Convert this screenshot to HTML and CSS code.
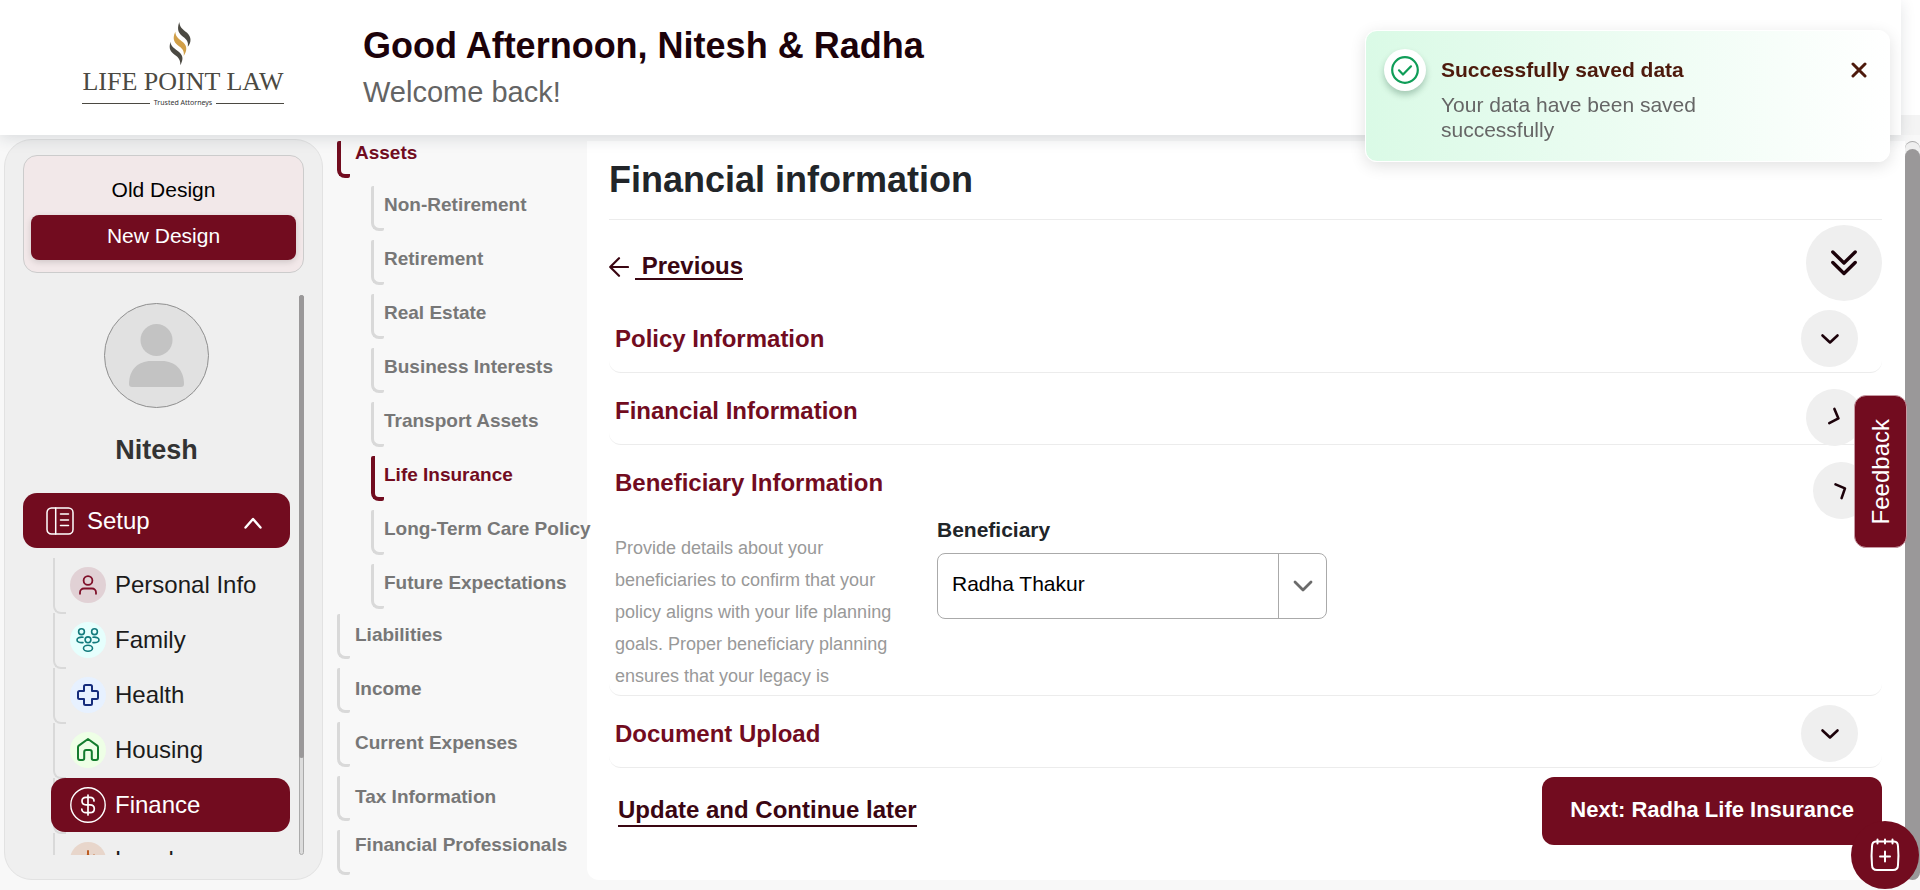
FILE: index.html
```html
<!DOCTYPE html>
<html lang="en">
<head>
<meta charset="utf-8">
<title>Life Point Law - Financial information</title>
<link rel="stylesheet" href="styles.css">
</head>
<body>
<div class="topbar">
  <header class="header">
    <div class="logo">
      <svg class="logo-mark" viewBox="296 34 70 134" aria-hidden="true">
        <path fill="#4b4942" d="M329 37C320 60 328 72 340 81C352 90 357 98 354 111C365 98 366 82 352 69C338 58 330 52 329 37Z"/>
        <path fill="#d19f48" d="M317 66C306 90 316 100 328 109C341 118 344 126 342 138C352 122 353 110 341 98C328 87 318 82 317 66Z"/>
        <path fill="#4b4942" d="M303 96C296 117 303 126 316 135C328 143 333 152 332 166C340 150 342 139 329 127C314 115 303 110 303 96Z"/>
      </svg>
      <span class="logo-name">LIFE POINT LAW</span>
      <span class="logo-tag">Trusted Attorneys</span>
    </div>
    <div class="greeting">
      <p class="greeting-title">Good Afternoon, Nitesh &amp; Radha</p>
      <p class="greeting-sub">Welcome back!</p>
    </div>
  </header>
</div>

<div class="layout">
  <aside class="sidebar">
    <div class="design-switch">
      <button class="design-option" type="button">Old Design</button>
      <button class="design-option design-option-on" type="button">New Design</button>
    </div>
    <div class="side-scroll">
      <div class="side-content">
        <svg class="avatar" viewBox="0 0 105 105" aria-hidden="true">
          <circle cx="52.5" cy="52.5" r="52" fill="#e1e1e1" stroke="#8f8f8f"/>
          <circle cx="52.5" cy="37" r="16" fill="#c3c3c3"/>
          <path fill="#c3c3c3" d="M25 81c0-14 9-23 22-23h11c13 0 22 9 22 23q0 3-3 3H28q-3 0-3-3Z"/>
        </svg>
        <p class="profile-name">Nitesh</p>
        <button class="setup" type="button">
          <svg class="setup-icon" viewBox="0 0 28 28" fill="none" stroke="#fff" stroke-width="1.5" stroke-linecap="round" aria-hidden="true">
            <rect x="1" y="1" width="26" height="26" rx="4.5"/><path d="M9.700 1v26M14.500 7h8M14.500 13h8M14.500 18.500h8"/>
          </svg>
          <span class="setup-text">Setup</span>
          <svg class="setup-arrow" viewBox="0 0 18 12" fill="none" stroke="#fff" stroke-width="2.400" stroke-linecap="round" stroke-linejoin="round" aria-hidden="true"><path d="M1.500 10.500 9 2l7.500 8.500"/></svg>
        </button>
        <ul class="steps">
          <li class="step"><a class="step-link" href="#personal">
            <svg class="step-icon" viewBox="0 0 36 36" fill="none" stroke="#7f1029" stroke-width="1.800" stroke-linecap="round" aria-hidden="true"><circle cx="18" cy="18" r="18" fill="#e1d1d5" stroke="none"/><circle cx="18" cy="13.500" r="4.400"/><path d="M10 26.800v-1.300a4 4 0 0 1 4-4h8a4 4 0 0 1 4 4v1.300"/></svg>
            Personal Info</a></li>
          <li class="step"><a class="step-link" href="#family">
            <svg class="step-icon" viewBox="0 0 36 36" fill="none" stroke="#117a7c" stroke-width="1.600" stroke-linecap="round" aria-hidden="true"><circle cx="18" cy="18" r="18" fill="#e6fffd" stroke="none"/><circle cx="11.500" cy="9.700" r="2.900"/><circle cx="24.500" cy="9.700" r="2.900"/><circle cx="18" cy="17.800" r="2.900"/><ellipse cx="18" cy="26.200" rx="4.500" ry="3"/><path d="M13 20.600c-3.700.3-6-.7-6-2.700s2.300-3 6-2.700M23 20.600c3.700.3 6-.7 6-2.700s-2.300-3-6-2.700"/></svg>
            Family</a></li>
          <li class="step"><a class="step-link" href="#health">
            <svg class="step-icon" viewBox="0 0 36 36" fill="none" stroke="#152c7c" stroke-width="2" stroke-linejoin="round" aria-hidden="true"><circle cx="18" cy="18" r="18" fill="#e7f1ff" stroke="none"/><path d="M15.500 8h5q1.500 0 1.500 1.500V14h4.500q1.500 0 1.500 1.500v5q0 1.500-1.500 1.500H22v4.500q0 1.500-1.500 1.500h-5q-1.500 0-1.500-1.500V22H9.500Q8 22 8 20.500v-5Q8 14 9.500 14H14V9.500Q14 8 15.500 8Z"/></svg>
            Health</a></li>
          <li class="step"><a class="step-link" href="#housing">
            <svg class="step-icon" viewBox="0 0 36 36" fill="none" stroke="#137c2d" stroke-width="2" stroke-linejoin="round" aria-hidden="true"><circle cx="18" cy="18" r="18" fill="#eeffe6" stroke="none"/><path d="M18 7 8.800 13.600Q8 14.200 8 15.200V26q0 2 2 2h2.500q1.700 0 1.700-1.700V20q0-2 2-2h3.600q2 0 2 2v6.300q0 1.700 1.700 1.700H26q2 0 2-2V15.200q0-1-.8-1.600Z"/></svg>
            Housing</a></li>
          <li class="step"><a class="step-link step-link-on" href="#finance">
            <svg class="step-icon" viewBox="0 0 36 36" fill="none" stroke="#fff" stroke-width="1.700" stroke-linecap="round" aria-hidden="true"><circle cx="18" cy="18" r="17.200" stroke-width="1.400"/><path d="M18 8v20M24 14c0-2.500-2-3.700-4-3.700h-4c-2.400 0-4 1.500-4 3.700s1.600 3.800 4 3.800h4c2.600 0 4.300 1.600 4.300 3.900s-1.700 4-4.300 4h-4c-2.400 0-4.200-1.400-4.200-3.700"/></svg>
            Finance</a></li>
          <li class="step"><a class="step-link" href="#legal">
            <svg class="step-icon" viewBox="0 0 36 36" fill="none" stroke="#b8500f" stroke-width="1.800" stroke-linecap="round" aria-hidden="true"><circle cx="18" cy="18" r="18" fill="#e8d6cb" stroke="none"/><path d="M18 9v18M12 15c3 0 4-1.500 6-1.500s3 1 6 .5M12 15l-3 7h6ZM24 14l-3 7h6ZM13 27h10"/></svg>
            Legal</a></li>
        </ul>
      </div>
      <div class="side-track"><div class="side-thumb"></div></div>
    </div>
  </aside>

  <nav class="subnav" aria-label="Finance sections">
    <a class="nav-item nav-item-first nav-item-on" href="#assets"><span class="bracket"></span><span class="nav-text">Assets</span></a>
    <div class="nav-children">
      <a class="nav-item" href="#non-retirement"><span class="bracket"></span><span class="nav-text">Non-Retirement</span></a>
      <a class="nav-item" href="#retirement"><span class="bracket"></span><span class="nav-text">Retirement</span></a>
      <a class="nav-item" href="#real-estate"><span class="bracket"></span><span class="nav-text">Real Estate</span></a>
      <a class="nav-item" href="#business"><span class="bracket"></span><span class="nav-text">Business Interests</span></a>
      <a class="nav-item" href="#transport"><span class="bracket"></span><span class="nav-text">Transport Assets</span></a>
      <a class="nav-item nav-item-on" href="#life"><span class="bracket"></span><span class="nav-text">Life Insurance</span></a>
      <a class="nav-item" href="#long-term"><span class="bracket"></span><span class="nav-text">Long-Term Care Policy</span></a>
      <a class="nav-item" href="#future"><span class="bracket"></span><span class="nav-text">Future Expectations</span></a>
    </div>
    <a class="nav-item" href="#liabilities"><span class="bracket"></span><span class="nav-text">Liabilities</span></a>
    <a class="nav-item" href="#income"><span class="bracket"></span><span class="nav-text">Income</span></a>
    <a class="nav-item" href="#expenses"><span class="bracket"></span><span class="nav-text">Current Expenses</span></a>
    <a class="nav-item" href="#tax"><span class="bracket"></span><span class="nav-text">Tax Information</span></a>
    <a class="nav-item nav-item-last" href="#professionals"><span class="bracket"></span><span class="nav-text">Financial Professionals</span></a>
  </nav>

  <main class="panel">
    <h1 class="page-title">Financial information</h1>
    <div class="previous-row">
      <a class="previous" href="#previous">
        <svg class="previous-arrow" viewBox="0 0 20 20" fill="none" stroke="#3a0612" stroke-width="2.200" stroke-linecap="round" stroke-linejoin="round" aria-hidden="true"><path d="M19 10H1.200M10 1.200 1.200 10l8.800 8.800"/></svg>
        <span class="previous-text">&nbsp;Previous</span>
      </a>
      <button class="round round-large" type="button" aria-label="Expand all">
        <svg class="double-arrow" viewBox="0 0 26 26" fill="none" stroke="#1c020a" stroke-width="3.400" stroke-linecap="round" stroke-linejoin="round" aria-hidden="true"><path d="M1.800 2 13 13 24.200 2M1.800 12.500 13 23.500l11.200-11"/></svg>
      </button>
    </div>

    <section class="section">
      <div class="section-head">
        <h2 class="section-title">Policy Information</h2>
        <button class="round" type="button" aria-label="Toggle policy information"><svg class="arrow" viewBox="0 0 18 10" aria-hidden="true"><path d="M1.500 1.500 9 8.500l7.500-7"/></svg></button>
      </div>
    </section>
    <section class="section">
      <div class="section-head">
        <h2 class="section-title">Financial Information</h2>
        <button class="round round-closing" type="button" aria-label="Toggle financial information"><svg class="arrow" viewBox="0 0 18 10" aria-hidden="true"><path d="M1.500 1.500 9 8.500l7.500-7"/></svg></button>
      </div>
    </section>
    <section class="section">
      <div class="section-head">
        <h2 class="section-title">Beneficiary Information</h2>
        <button class="round round-opening" type="button" aria-label="Toggle beneficiary information"><svg class="arrow" viewBox="0 0 18 10" aria-hidden="true"><path d="M1.500 1.500 9 8.500l7.500-7"/></svg></button>
      </div>
      <div class="section-body">
        <p class="hint">Provide details about your beneficiaries to confirm that your policy aligns with your life planning goals. Proper beneficiary planning ensures that your legacy is</p>
        <div class="field">
          <label class="field-label" for="beneficiary">Beneficiary</label>
          <div class="select-box">
            <select class="select" id="beneficiary"><option>Radha Thakur</option></select>
            <span class="select-arrow"><svg class="select-chevron" viewBox="0 0 20 12" fill="none" stroke="#6b6b6b" stroke-width="2.800" stroke-linecap="round" stroke-linejoin="round" aria-hidden="true"><path d="M2 2l8 8 8-8"/></svg></span>
          </div>
        </div>
      </div>
    </section>
    <section class="section">
      <div class="section-head">
        <h2 class="section-title">Document Upload</h2>
        <button class="round" type="button" aria-label="Toggle document upload"><svg class="arrow" viewBox="0 0 18 10" aria-hidden="true"><path d="M1.500 1.500 9 8.500l7.500-7"/></svg></button>
      </div>
    </section>

    <div class="actions">
      <a class="later" href="#later">Update and Continue later</a>
      <button class="next" type="button">Next: Radha Life Insurance</button>
    </div>
  </main>
  <div class="page-track"><div class="page-thumb"></div></div>
</div>

<div class="toast" role="status">
  <span class="toast-badge">
    <svg class="toast-check" viewBox="0 0 28 28" fill="none" stroke="#0f9d58" stroke-width="2.200" stroke-linecap="round" stroke-linejoin="round" aria-hidden="true"><circle cx="14" cy="14" r="12.800"/><path d="M8 14.300l4 4.200 8-8.200"/></svg>
  </span>
  <div class="toast-body">
    <strong class="toast-title">Successfully saved data</strong>
    <p class="toast-text">Your data have been saved successfully</p>
  </div>
  <button class="toast-close" type="button" aria-label="Close">
    <svg class="toast-x" viewBox="0 0 16 16" fill="none" stroke="#4d1a0c" stroke-width="3" stroke-linecap="round" aria-hidden="true"><path d="M2 2l12 12M14 2 2 14"/></svg>
  </button>
</div>
<button class="feedback" type="button">Feedback</button>
<button class="add-note" type="button" aria-label="Add appointment">
  <svg class="add-icon" viewBox="0 0 30 34" fill="none" stroke="#fff" stroke-width="2" stroke-linecap="round" aria-hidden="true"><path d="M6 3.500h18q4 0 4 5c.6 6 .6 12 0 18.500q0 5-5 5H7q-5 0-5-5c-.6-6.500-.6-12.500 0-18.500q0-5 4-5M7.500 1.500v4M15 1.500v4M22.500 1.500v4M15 13.500v10M10 18.500h10"/></svg>
</button>
</body>
</html>
```
FILE: styles.css
```css
* { box-sizing: border-box; }

body {
  margin: 0;
  height: 100vh;
  display: flex;
  flex-direction: column;
  overflow: hidden;
  background: #f8f8f8;
  color: #212529;
  font-family: "Liberation Sans", Arial, sans-serif;
  font-size: 21px;
}

button, select { font: inherit; }
button { border: 0; padding: 0; cursor: pointer; }
a { color: inherit; text-decoration: none; }
p, h1, h2 { margin: 0; }

/* Header */
.topbar {
  position: relative;
  z-index: 1;
  flex: none;
  padding-right: 19px;
  background: linear-gradient(#fff 115px, #f4f4f4 115px);
}
.header {
  display: flex;
  align-items: flex-start;
  height: 135px;
  padding: 21px 0 0 82px;
  background: #fff;
  box-shadow: 0 4px 14px rgba(30, 45, 60, 0.13);
}
.logo {
  display: flex;
  flex-direction: column;
  align-items: center;
  width: 202px;
}
.logo-mark { width: 24px; height: 45px; margin-right: 6px; }
.logo-name {
  margin-top: 1px;
  color: #4b4942;
  font-family: "Liberation Serif", "Times New Roman", serif;
  font-size: 26px;
  line-height: 30px;
  white-space: nowrap;
}
.logo-tag {
  display: flex;
  align-items: center;
  gap: 4px;
  width: 100%;
  color: #333;
  font-family: "Noto Sans", sans-serif;
  font-size: 7px;
  line-height: 12px;
  white-space: nowrap;
}
.logo-tag::before, .logo-tag::after {
  content: "";
  flex: 1;
  height: 1px;
  background: #4b4942;
}
.greeting { padding: 1px 0 0 79px; }
.greeting-title {
  color: #1c020a;
  font-size: 36px;
  font-weight: bold;
  line-height: 48px;
}
.greeting-sub {
  color: #646464;
  font-size: 29px;
  line-height: 44px;
}

/* Page grid */
.layout {
  flex: 1;
  min-height: 0;
  display: grid;
  grid-template-columns: 319px 264px minmax(0, 1fr) 15px;
  padding: 4px 0 10px 4px;
}

/* Sidebar */
.sidebar {
  display: flex;
  flex-direction: column;
  min-height: 0;
  padding: 15px 18px 24px 18px;
  border: 1px solid #e2e2e2;
  border-radius: 28px;
  background: #efefef;
}
.design-switch {
  flex: none;
  padding: 13px 7px 12px;
  border: 1px solid #ccc;
  border-radius: 14px;
  background: #f2e8e9;
}
.design-option {
  display: block;
  width: 100%;
  height: 45px;
  padding-bottom: 3px;
  border-radius: 8px;
  background: none;
  color: #000;
}
.design-option-on {
  margin-top: 1px;
  background: #720c1f;
  color: #fff;
  box-shadow: 0 2px 6px rgba(0, 0, 0, 0.15);
}
.side-scroll {
  flex: 1;
  min-height: 0;
  display: flex;
  gap: 9px;
  margin-top: 22px;
}
.side-content {
  flex: 1;
  overflow: hidden;
  padding-top: 8px;
}
.side-track {
  width: 5px;
  border: 1px solid #aaa;
  border-radius: 3px;
  background: #dcdcdc;
}
.side-thumb {
  width: 5px;
  height: 83%;
  margin: -1px;
  border-radius: 3px;
  background: #9a9899;
}
.avatar { display: block; width: 105px; height: 105px; margin: 0 auto; }
.profile-name {
  margin: 25px 0 26px;
  color: #333;
  font-size: 27px;
  font-weight: bold;
  line-height: 34px;
  text-align: center;
}
.setup {
  display: flex;
  align-items: center;
  width: 100%;
  height: 55px;
  padding: 0 28px 0 23px;
  border-radius: 14px;
  background: #720c1f;
  color: #fff;
  font-size: 24px;
}
.setup-icon { width: 28px; height: 28px; }
.setup-text { flex: 1; padding-left: 13px; text-align: left; }
.setup-arrow { width: 18px; height: 12px; margin-top: 5px; }
.steps {
  margin: 10px 0 0;
  padding: 0;
  list-style: none;
}
.step {
  position: relative;
  height: 55px;
  padding-left: 28px;
}
.step::before {
  content: "";
  position: absolute;
  left: 30px;
  top: 0;
  width: 11px;
  height: 54px;
  border-left: 2px solid #d9d9d9;
  border-bottom: 2px solid #d9d9d9;
  border-bottom-left-radius: 8px;
}
.step-link {
  position: relative;
  display: flex;
  align-items: center;
  gap: 9px;
  height: 54px;
  padding-left: 19px;
  border-radius: 14px;
  color: #1b1b1b;
  font-size: 24px;
}
.step-link-on { background: #720c1f; color: #fff; }
.step-icon { width: 36px; height: 36px; }

/* Section navigation */
.subnav {
  position: relative;
  padding: 2px 0 0 14px;
  color: #777;
  font-size: 19px;
  font-weight: bold;
  line-height: 24px;
  white-space: nowrap;
}
.nav-item {
  display: flex;
  gap: 5px;
  height: 45px;
  margin-bottom: 9px;
}
.bracket {
  flex: none;
  width: 13px;
  border-left: 3px solid #d9d9d9;
  border-bottom: 3px solid #d9d9d9;
  border-radius: 2px 2px 2px 8px;
}
.nav-text { padding-top: 9px; }
.nav-item-first { height: 37px; margin-bottom: 8px; }
.nav-item-first .nav-text { padding-top: 0; }
.nav-item-last { margin-bottom: 0; }
.nav-item-last .nav-text { padding-top: 3px; }
.nav-item-on { color: #720c1f; }
.nav-item-on .bracket { border-width: 0 0 4px 4px; border-color: #720c1f; }
.nav-children { padding-left: 34px; margin-bottom: 5px; }
.nav-children .nav-item { gap: 0; }
.nav-children .nav-item:last-child { margin-bottom: 0; }
.nav-children .nav-text { padding-top: 7px; }

/* Main panel */
.panel {
  margin-top: 2px;
  padding: 17px 23px 0 22px;
  border-bottom-left-radius: 12px;
  background: #fff;
}
.page-title {
  padding-bottom: 17px;
  border-bottom: 1px solid #ececec;
  font-size: 36px;
  line-height: 44px;
}
.previous-row {
  display: flex;
  align-items: center;
  justify-content: space-between;
  padding-top: 5px;
}
.previous {
  display: flex;
  align-items: center;
  gap: 6px;
  padding-top: 7px;
  color: #3a0612;
  font-size: 24px;
  font-weight: bold;
}
.previous-arrow { width: 20px; height: 20px; }
.previous-text { border-bottom: 2px solid #3a0612; line-height: 24px; }
.round {
  display: flex;
  align-items: center;
  justify-content: center;
  flex: none;
  width: 57px;
  height: 57px;
  border-radius: 50%;
  background: #efefef;
}
.round-large { width: 76px; height: 76px; }
.round-closing { transform: translate(5px, 7px) rotate(-70deg); }
.round-opening { transform: translate(12px, 8px) rotate(-114deg); }
.double-arrow { width: 26px; height: 26px; }
.arrow {
  width: 18px;
  height: 10px;
  overflow: visible;
  fill: none;
  stroke: #1c020a;
  stroke-width: 2.6;
  stroke-linecap: round;
  stroke-linejoin: round;
}
.section {
  border-bottom: 1px solid #ececec;
  border-radius: 0 0 12px 12px;
}
.section-head {
  display: flex;
  align-items: center;
  justify-content: space-between;
  padding: 9px 24px 5px 6px;
}
.section-title {
  color: #720c1f;
  font-size: 24px;
  line-height: 30px;
}
.section-body {
  display: flex;
  align-items: flex-start;
  gap: 32px;
  padding: 2px 6px 3px;
}
.hint {
  width: 290px;
  margin-top: 14px;
  color: #999;
  font-size: 18px;
  line-height: 32px;
}
.field { width: 390px; }
.field-label {
  display: block;
  margin-bottom: 11px;
  font-weight: bold;
  line-height: 24px;
}
.select-box { position: relative; height: 66px; }
.select {
  appearance: none;
  width: 100%;
  height: 100%;
  padding: 0 60px 6px 14px;
  border: 1px solid #aaa;
  border-radius: 8px;
  background: #fff;
  color: #000;
}
.select-arrow {
  position: absolute;
  top: 1px;
  right: 1px;
  bottom: 1px;
  display: flex;
  align-items: center;
  justify-content: center;
  width: 48px;
  border-left: 1px solid #aaa;
  pointer-events: none;
}
.select-chevron { width: 20px; height: 12px; }
.actions {
  display: flex;
  align-items: center;
  justify-content: space-between;
  padding: 9px 0 0 9px;
}
.later {
  border-bottom: 2px solid #3a0612;
  color: #3a0612;
  font-size: 24px;
  font-weight: bold;
  line-height: 30px;
}
.next {
  height: 68px;
  padding: 0 28px 3px;
  border-radius: 12px;
  background: #720c1f;
  color: #fff;
  font-size: 22px;
  font-weight: bold;
}
.page-track {
  margin-top: 2px;
  padding-top: 7px;
  border: 1px solid #aaa;
  border-width: 1px 0 0;
  border-radius: 8px;
  background: #efefef;
}
.page-thumb {
  height: 100%;
  border-radius: 8px;
  background: #9a9899;
}

/* Floating elements */
.toast {
  position: fixed;
  z-index: 3;
  top: 30px;
  right: 30px;
  display: flex;
  align-items: flex-start;
  width: 525px;
  padding: 18px 22px 17px 18px;
  border: 1px solid #fff;
  border-radius: 12px;
  background: linear-gradient(90deg, #dafae6, #fff);
  box-shadow: 0 4px 16px rgba(0, 0, 0, 0.12);
}
.toast-badge {
  display: flex;
  align-items: center;
  justify-content: center;
  flex: none;
  width: 42px;
  height: 42px;
  border-radius: 50%;
  background: #fff;
  box-shadow: 0 4px 6px rgba(0, 60, 30, 0.25);
}
.toast-check { width: 28px; height: 28px; }
.toast-body { flex: 1; padding: 8px 80px 2px 15px; }
.toast-title {
  display: block;
  color: #4d1a0c;
  line-height: 26px;
}
.toast-text {
  margin-top: 9px;
  color: #666;
  line-height: 25px;
}
.toast-close {
  display: flex;
  align-items: center;
  height: 42px;
  background: none;
}
.toast-x { width: 16px; height: 16px; }
.feedback {
  position: fixed;
  z-index: 3;
  top: 395px;
  right: 13px;
  width: 53px;
  padding: 23px 0;
  border: 1px solid #c79aa3;
  border-radius: 12px;
  background: #720c1f;
  color: #fff;
  font-size: 24px;
  writing-mode: sideways-lr;
}
.add-note {
  position: fixed;
  z-index: 3;
  right: 1px;
  bottom: 1px;
  display: flex;
  align-items: center;
  justify-content: center;
  width: 68px;
  height: 68px;
  border-radius: 50%;
  background: #720c1f;
}
.add-icon { width: 30px; height: 34px; }
```
